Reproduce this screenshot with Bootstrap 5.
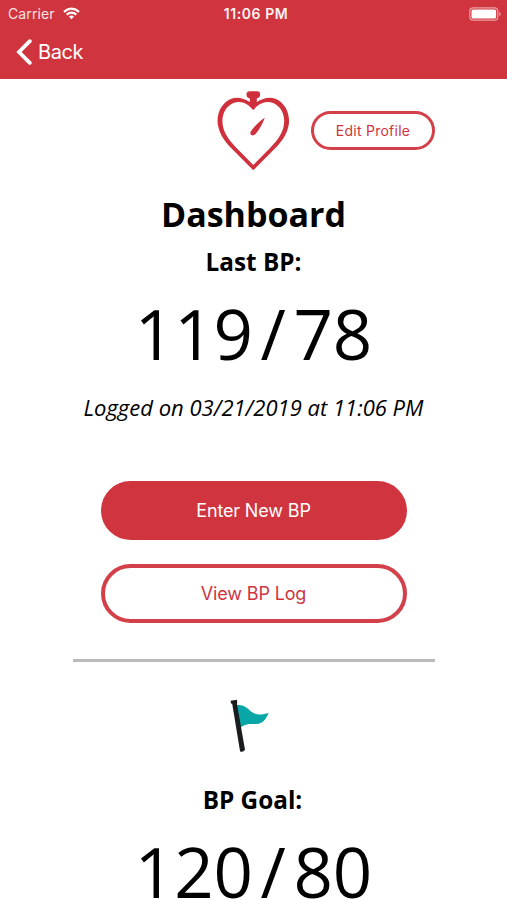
<!DOCTYPE html>
<html lang="en">
<head>
<meta charset="utf-8">
<meta name="viewport" content="width=device-width, initial-scale=1">
<title>Dashboard</title>
<link href="https://cdn.jsdelivr.net/npm/bootstrap@5.3.0/dist/css/bootstrap.min.css" rel="stylesheet">
<style>
:root{--brand:#d0343e}
html,body{height:900px;overflow:hidden}
body{background:#fff;color:#000;font-family:"Open Sans","Noto Sans",sans-serif}
svg{display:block;flex:none}
.ui-font{font-family:Inter,"Liberation Sans",sans-serif}
.top-area{background:var(--brand);height:79px;color:#fff}
.status-row{height:27px;font-size:14px;line-height:27px;padding:0 5px 0 8px}
.status-row>div{flex:1 1 0}
.carrier{opacity:.87;letter-spacing:.1px}
.clock{font-weight:600;font-size:14px;opacity:.95;letter-spacing:.55px;margin-left:2px}
.back-link{height:50px;padding-left:16px;gap:5px;font-size:20px;color:#fff;letter-spacing:-.4px}
.brand-row{height:103px;display:grid;grid-template-columns:1fr 73px 1fr;padding:12px 72px 0 72px}
.btn-brand{background:var(--brand);color:#fff;border:4px solid var(--brand)}
.btn-line{background:#fff;color:var(--brand);border:4px solid #d34049}
.btn-profile{width:124px;height:39px;font-size:14px;margin-top:20px;padding:0;letter-spacing:.25px;border-width:3px}
.btn-wide{width:306px;height:59px;font-size:18px;padding:0;letter-spacing:-.15px}
.page-title{font-size:34px;font-weight:700;line-height:46px;margin-top:9px}
.sub-title{font-size:24.3px;font-weight:700;line-height:32px}
.last-title{margin-top:9px}
.reading{font-size:69px;line-height:96px;margin-top:7px}
.reading span{margin:0 7.5px}
.logged{font-size:22px;line-height:30px;font-style:italic;margin-top:11px}
.action-list{margin-top:59px}
.rule{width:362px;height:3px;background:#bbb;margin-top:36px}
.goal-flag{margin:37px 5px 0 0}
.goal-title{margin:29px 2px 0 0}
</style>
</head>
<body>
<header class="top-area ui-font">
  <div class="status-row d-flex align-items-center">
    <div class="d-flex align-items-center gap-2"><span class="carrier">Carrier</span>
      <svg width="17" height="13" viewBox="0 0 18 13" fill="none" stroke="#fff" stroke-width="2.3"><path d="M1 4.7Q9-2 17 4.7M3.9 7.7Q9 3.4 14.1 7.7"/><path d="M6.3 9.8Q9 7.6 11.7 9.8L9 12.6Z" fill="#fff" stroke="none"/></svg>
    </div>
    <span class="clock">11:06 PM</span>
    <div class="d-flex justify-content-end">
      <svg width="33" height="14" viewBox="0 0 33 14"><rect x=".8" y=".8" width="28" height="12.4" rx="3.5" fill="none" stroke="#eba0a5" stroke-width="1.2"/><rect x="2.5" y="2.5" width="24.6" height="9" rx="1.6" fill="#fff"/><path d="M30.3 4.7q3 2.3 0 4.6z" fill="#eba0a5"/></svg>
    </div>
  </div>
  <a class="back-link d-inline-flex align-items-center text-decoration-none" href="#">
    <svg width="17" height="26" viewBox="0 0 17 26" fill="none" stroke="#fff" stroke-width="3.8"><path d="M13.8 2.2L3 13L13.8 23.8" stroke-linecap="round"/></svg>
    <span>Back</span>
  </a>
</header>
<main class="d-flex flex-column align-items-center text-center">
  <div class="brand-row w-100">
    <div></div>
    <svg width="73" height="80" viewBox="0 0 73 80"><path fill="#cf303c" fill-rule="evenodd" d="M32.8 11V7.5C30 7 29.5 5.5 29.5 3.6Q29.5 .3 32.5 .3H40.1Q43.1 .3 43.1 3.6C43.1 5.5 42.6 7 39.8 7.5V11C46 6.8 53 5.3 59 8C69 12.5 74.5 25 71 37C68.3 47.5 61 54.5 54 61.5L36.3 79.3L18.6 61.5C11.6 54.5 4.3 47.5 1.6 37C-1.9 25 3.6 12.5 13.6 8C19.6 5.3 26.6 6.8 32.8 11ZM36.3 19.3C31.5 12.5 23.5 9 16.5 12C8 15.5 3.8 25 6 35.5C8 45 14.5 51.5 21 58.5L36.3 74L51.6 58.5C58.1 51.5 64.6 45 66.6 35.5C68.8 25 64.6 15.5 56.1 12C49.1 9 41.1 12.5 36.3 19.3Z"/><path fill="#cf303c" d="M47.8 26.8C45.5 33 42.5 38.5 38.5 43Q36.5 45.3 34.3 44Q32.6 42.6 33.8 40.5C37 35.8 42 30.5 47.8 26.8Z"/></svg>
    <div class="d-flex justify-content-end"><button class="btn btn-line btn-profile rounded-pill ui-font" type="button">Edit Profile</button></div>
  </div>
  <h1 class="page-title mb-0">Dashboard</h1>
  <h2 class="sub-title last-title mb-0">Last BP:</h2>
  <div class="reading">119<span>/</span>78</div>
  <div class="logged">Logged on 03/21/2019 at 11:06 PM</div>
  <div class="action-list d-grid gap-4"><button class="btn btn-brand btn-wide rounded-pill ui-font" type="button">Enter New BP</button>
  <button class="btn btn-line btn-wide rounded-pill ui-font" type="button">View BP Log</button></div>
  <div class="rule"></div>
  <svg class="goal-flag" width="42" height="56" viewBox="0 0 42 56"><path fill="#08a6a7" d="M6 6.2C13 5 17 8.5 21 12.5C26 16.5 32 16 38.5 14C36 21 32 24.5 27 25C20 25 15 24.5 10 29Z"/><path fill="#1b1c1e" d="M.6 1.8L6.9 .8L7.3 3.8L6.9 4.5L15 50.8Q13.4 53.5 10.1 52.5L2.2 4.8L1 4.5Z"/></svg>
  <h2 class="sub-title goal-title">BP Goal:</h2>
  <div class="reading">120<span>/</span>80</div>
</main>
<script src="https://cdn.jsdelivr.net/npm/bootstrap@5.3.0/dist/js/bootstrap.bundle.min.js"></script>
</body>
</html>
